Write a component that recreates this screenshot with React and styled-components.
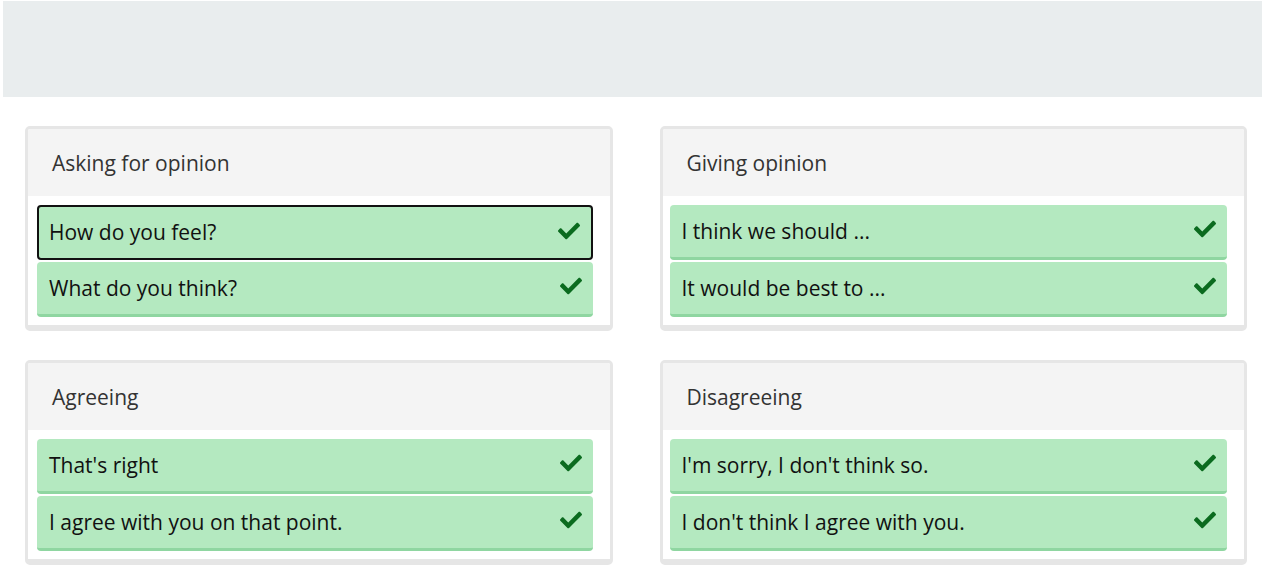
import React from 'react'
import styled, { createGlobalStyle } from 'styled-components'
import { FaCheck } from 'react-icons/fa'

const Global = createGlobalStyle`
  body {
    margin: 0;
    background: #ffffff;
    font-family: "Open Sans", "Liberation Sans", sans-serif;
  }
`;

const Page = styled.div`
  padding: 1px 0 0 3px;
`;

const TopBar = styled.div`
  height: 96px;
  background-color: #e9edee;
`;

const Grid = styled.div`
  display: grid;
  grid-template-columns: 1fr 1fr;
  column-gap: 47px;
  row-gap: 29px;
  padding: 29px 15px 0 22px;
`;

const Card = styled.div`
  background: #ffffff;
  border: 3px solid #e6e6e6;
  border-bottom-width: 6px;
  border-radius: 5px;
  overflow: hidden;
`;

const Header = styled.div`
  height: 67px;
  display: flex;
  align-items: center;
  padding-left: 24px;
  background-color: #f4f4f4;
  color: #333333;
  font-size: 21px;
`;

const List = styled.div`
  display: flex;
  flex-direction: column;
  gap: 2px;
  padding: 9px 17px 8px ${p => (p.$right ? '7px' : '9px')};
`;

const Item = styled.div`
  height: 55px;
  box-sizing: border-box;
  display: flex;
  align-items: center;
  justify-content: space-between;
  padding: 0 11px 0 ${p => (p.$focused ? '10px' : '12px')};
  background-color: #b4e9c0;
  border-radius: 4px;
  border: ${p => (p.$focused ? '2px solid #111111' : 'none')};
  border-bottom: ${p => (p.$focused ? '2px solid #111111' : '3px solid #8fd6a1')};
  color: #111111;
  font-size: 21px;
  line-height: 1;
  svg {
    color: #0b6b1f;
    flex: none;
    margin-top: -4px;
  }
`;

const groups = [
  { title: 'Asking for opinion', items: ['How do you feel?', 'What do you think?'] },
  { title: 'Giving opinion', items: ['I think we should ...', 'It would be best to ...'] },
  { title: 'Agreeing', items: ["That's right", 'I agree with you on that point.'] },
  { title: 'Disagreeing', items: ["I'm sorry, I don't think so.", "I don't think I agree with you."] },
];

function App() {
  return (
    <Page>
      <Global />
      <TopBar />
      <Grid>
        {groups.map((g, gi) => (
          <Card key={g.title}>
            <Header>{g.title}</Header>
            <List $right={gi % 2 === 1}>
              {g.items.map((t, i) => (
                <Item key={t} $focused={gi === 0 && i === 0}>
                  <span>{t}</span>
                  <FaCheck size={22} />
                </Item>
              ))}
            </List>
          </Card>
        ))}
      </Grid>
    </Page>
  )
}

export default App
